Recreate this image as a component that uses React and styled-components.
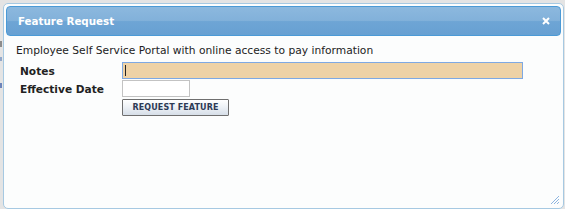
import React from "react";
import styled, { createGlobalStyle } from "styled-components";

const Global = createGlobalStyle`
  html, body { margin: 0; padding: 0; }
  body {
    width: 565px;
    height: 209px;
    overflow: hidden;
    background: #e4e4e4;
    font-family: "DejaVu Sans", Verdana, sans-serif;
  }
`;

const Page = styled.div`
  position: relative;
  width: 565px;
  height: 209px;
  overflow: hidden;
`;

const BackMarks = styled.div`
  display: flex;
  flex-direction: column;
  padding-top: 41px;
  gap: 10px;
`;

const Mark = styled.div`
  width: 2px;
  height: ${(p) => p.$h || 6}px;
  margin-top: ${(p) => p.$gap || 0}px;
  background: ${(p) => p.$color || "#555"};
  opacity: 0.7;
`;

const Dialog = styled.div`
  position: absolute;
  left: 3px;
  top: 3px;
  width: 555px;
  height: 200px;
  padding: 2px;
  border: 1px solid #a6c9e2;
  border-radius: 5px;
  background: #fcfdfd;
  display: flex;
  flex-direction: column;
`;

const TitleBar = styled.div`
  height: 28px;
  border: 1px solid #4b9ad6;
  border-radius: 4px;
  background: linear-gradient(
    to bottom,
    #8cb8de 0%,
    #82b1da 48%,
    #6ea5d5 52%,
    #67a0d2 100%
  );
  display: flex;
  align-items: center;
  justify-content: space-between;
  padding: 0 8px 0 11px;
`;

const Title = styled.span`
  color: #fff;
  font-weight: bold;
  font-size: 10.3px;
`;

const Close = styled.svg`
  width: 8px;
  height: 8px;
  margin-right: 2px;
`;

const Body = styled.div`
  flex: 1;
  position: relative;
  padding: 8px 0 0 10px;
  display: flex;
  flex-direction: column;
`;

const Intro = styled.div`
  font-size: 10.7px;
  color: #222;
  line-height: 13px;
  margin-bottom: 5px;
`;

const Form = styled.div`
  display: grid;
  grid-template-columns: 102px auto;
  row-gap: 1px;
  padding-left: 4px;
  align-items: center;
`;

const Label = styled.label`
  font-size: 10.6px;
  font-weight: bold;
  color: #222;
  line-height: 12px;
  padding-top: 1px;
`;

const NotesInput = styled.div`
  width: 397px;
  height: 15px;
  border: 1px solid #7ea9e3;
  background: #eed2a6;
  display: flex;
  align-items: center;
  padding-left: 2px;
`;

const Caret = styled.span`
  width: 1px;
  height: 11px;
  background: #222;
`;

const DateInput = styled.div`
  width: 66px;
  height: 15px;
  border: 1px solid #c3c3c3;
  background: #fff;
`;

const Button = styled.button`
  grid-column: 2;
  justify-self: start;
  margin-top: 1px;
  width: 107px;
  height: 17px;
  padding: 0;
  border: 1px solid #6f6f6f;
  border-radius: 1px;
  background: linear-gradient(to bottom, #ffffff 0%, #eef2f6 45%, #d6dee8 100%);
  color: #2d3a55;
  font-family: "DejaVu Sans", Verdana, sans-serif;
  font-weight: bold;
  font-size: 8px;
  letter-spacing: 0.1px;
`;

const Grip = styled.svg`
  position: absolute;
  right: 2px;
  bottom: 2px;
  width: 9px;
  height: 9px;
`;

export default function App() {
  return (
    <>
      <Global />
      <Page>
        <BackMarks>
          <Mark $color="#666" />
          <Mark $color="#6f8fbf" $h={4} />
          <Mark $color="#3b5ba8" $h={5} $gap={12} />
        </BackMarks>
        <Dialog>
          <TitleBar>
            <Title>Feature Request</Title>
            <Close viewBox="0 0 8 8">
              <path d="M1 1L7 7M7 1L1 7" stroke="#fff" strokeWidth="2" strokeLinecap="butt" />
            </Close>
          </TitleBar>
          <Body>
            <Intro>Employee Self Service Portal with online access to pay information</Intro>
            <Form>
              <Label>Notes</Label>
              <NotesInput>
                <Caret />
              </NotesInput>
              <Label>Effective Date</Label>
              <DateInput />
              <Button>REQUEST FEATURE</Button>
            </Form>
            <Grip viewBox="0 0 9 9">
              <path d="M9 1L1 9M9 4L4 9M9 7L7 9" stroke="#8fb6e0" strokeWidth="1" />
            </Grip>
          </Body>
        </Dialog>
      </Page>
    </>
  );
}
